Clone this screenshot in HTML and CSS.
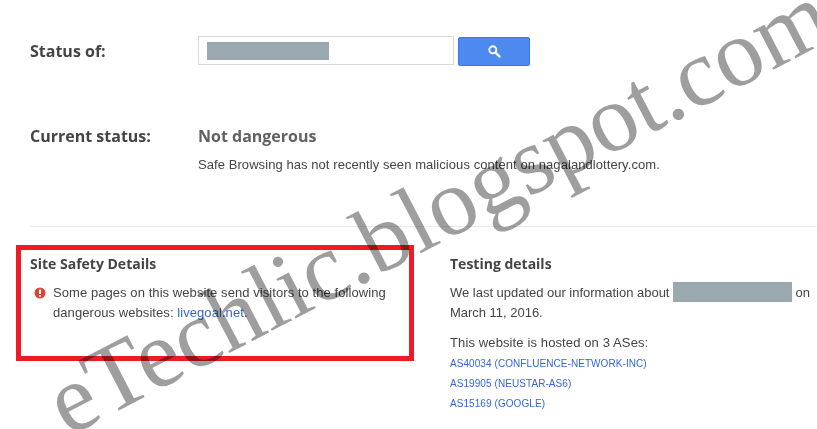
FILE: index.html
```html
<!DOCTYPE html>
<html lang="en">
<head>
<meta charset="utf-8">
<title>Safe Browsing site status</title>
<link rel="stylesheet" href="styles.css">
</head>
<body>
<main class="page">
  <section class="row status-row">
    <h2 class="label">Status of:</h2>
    <div class="search">
      <div class="input"><span class="redact redact-input"></span></div>
      <button class="btn" type="button" aria-label="Search">
        <svg width="13" height="13" viewBox="0 0 13 13"><circle cx="4.8" cy="4.8" r="3.5" fill="none" stroke="#fff" stroke-width="1.9"/><path d="M7.6 7.6 L11.6 11.6" stroke="#fff" stroke-width="2.2" stroke-linecap="round"/></svg>
      </button>
    </div>
  </section>
  <section class="row current-row">
    <h2 class="label">Current status:</h2>
    <div class="current">
      <h3 class="verdict">Not dangerous</h3>
      <p class="desc">Safe Browsing has not recently seen malicious content on nagalandlottery.com.</p>
    </div>
  </section>
  <hr class="rule">
  <section class="details">
    <div class="col col-left">
      <h3 class="title">Site Safety Details</h3>
      <div class="warn">
        <svg class="warn-icon" width="12" height="12" viewBox="0 0 12 12"><circle cx="6" cy="6" r="5.5" fill="#db4437"/><rect x="5" y="2.5" width="2" height="4.5" fill="#fff"/><rect x="5" y="8" width="2" height="1.7" fill="#fff"/></svg>
        <p class="warn-text">Some pages on this website send visitors to the following dangerous websites: <a class="link" href="#">livegoal.net</a>.</p>
      </div>
    </div>
    <div class="col col-right">
      <h3 class="title">Testing details</h3>
      <p class="para">We last updated our information about <span class="redact redact-inline"></span> on March 11, 2016.</p>
      <p class="para hosted">This website is hosted on 3 ASes:</p>
      <ul class="as-list">
        <li><a class="as" href="#">AS40034 (CONFLUENCE-NETWORK-INC)</a></li>
        <li><a class="as" href="#">AS19905 (NEUSTAR-AS6)</a></li>
        <li><a class="as" href="#">AS15169 (GOOGLE)</a></li>
      </ul>
    </div>
  </section>
  <div class="red-box"></div>
  <div class="watermark">eTechlic.blogspot.com</div>
</main>
</body>
</html>
```
FILE: styles.css
```css
html, body { margin: 0; padding: 0; background: #fff; }
body { width: 817px; height: 429px; overflow: hidden; font-family: "Liberation Sans", Arial, sans-serif; color: #404040; }
.page { position: relative; width: 817px; height: 429px; overflow: hidden; padding: 36px 0 0 30px; box-sizing: border-box; }
.row { display: flex; }
.label { width: 168px; margin: 0; font: 700 16px/24px "Open Sans", sans-serif; color: #444; }
.status-row { height: 30px; align-items: center; }
.search { display: flex; gap: 4px; }
.input { width: 246px; height: 27px; border: 1px solid #d9d9d9; display: flex; align-items: center; padding-left: 8px; }
.redact { display: inline-block; background: #9aa9b0; }
.redact-input { width: 122px; height: 18px; }
.btn { width: 72px; height: 29px; margin-top: 1px; padding: 0; background: #4d8af0; border: 1px solid #3b78e7; border-radius: 2px; display: flex; align-items: center; justify-content: center; }
.current-row { margin-top: 58px; }
.verdict { margin: 0; font: 700 16px/24px "Open Sans", sans-serif; color: #616161; }
.desc { margin: 7px 0 0; font-size: 13px; line-height: 20px; letter-spacing: 0.07px; color: #444; }
.rule { width: 787px; margin: 51px 0 0; border: 0; border-top: 1px solid #ebebeb; }
.details { display: flex; margin-top: 25px; }
.col-left { width: 420px; }
.col-right { width: 367px; }
.title { margin: 0; font: 700 14px/24px "Open Sans", sans-serif; color: #444; }
.warn { display: flex; gap: 7px; margin-top: 7px; }
.warn-icon { flex: none; margin: 4px 0 0 4px; }
.warn-text { width: 345px; margin: 0; font-size: 13px; line-height: 20px; letter-spacing: 0.07px; color: #444; }
.link { color: #3367d6; text-decoration: none; }
.para { margin: 6px 0 0; font-size: 13px; line-height: 20px; letter-spacing: -0.02px; color: #444; }
.redact-inline { width: 119px; height: 20px; vertical-align: -5px; }
.hosted { margin-top: 10px; letter-spacing: 0.12px; }
.as-list { margin: -1px 0 0; padding: 0; list-style: none; }
.as-list li { height: 20px; line-height: 20px; }
.as { font-size: 10px; letter-spacing: 0.07px; color: #3367d6; text-decoration: none; }
.red-box { position: absolute; left: 16px; top: 245px; width: 398px; height: 116px; border: 5px solid #ed1c24; box-sizing: border-box; }
.watermark { position: absolute; left: 68px; top: 357px; font: 400 96px/1 "Liberation Serif", serif; color: #9e9e9e; white-space: nowrap; transform-origin: 0 80px; transform: rotate(-27.5deg); mix-blend-mode: multiply; }
```
